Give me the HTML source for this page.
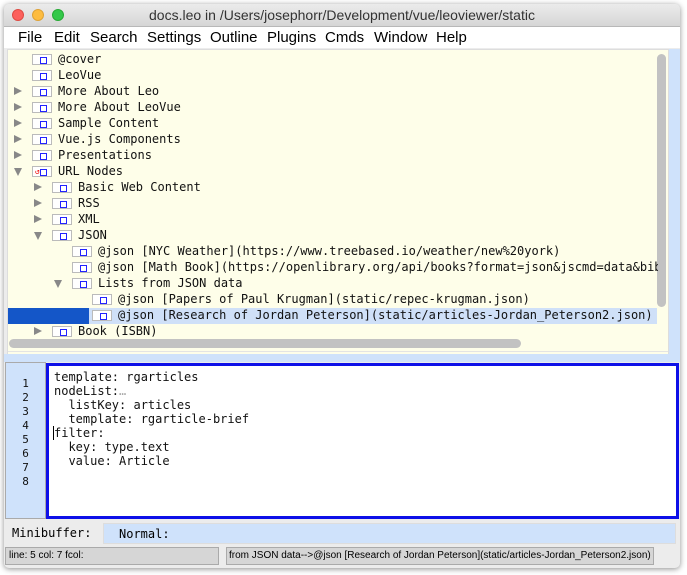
<!DOCTYPE html>
<html><head><style>
*{margin:0;padding:0;box-sizing:border-box}
body{width:687px;height:575px;background:#fff;position:relative;overflow:hidden;font-family:"Liberation Sans",sans-serif}
.win{position:absolute;left:4px;top:4px;width:676px;height:564px;background:#ececec;border-radius:5px;box-shadow:0 1px 6px rgba(0,0,0,.45);overflow:hidden}
.title{position:absolute;left:0;top:0;width:676px;height:23px;background:linear-gradient(#ebebeb,#d6d6d6);border-bottom:1px solid #b8b8b8;text-align:center;font-size:14px;line-height:23px;color:#333}
.dot{position:absolute;top:5px;width:12px;height:12px;border-radius:50%}
.menu{position:absolute;left:0;top:23px;width:676px;height:21px;background:#fff;font-size:15px;line-height:21px;color:#000}
.menu span{position:absolute;top:0}
.tree{position:absolute;left:3px;top:45px;width:662px;height:306px;background:#fefee9;border:1px solid #ddd}
.side{position:absolute;left:665px;top:45px;width:11px;height:306px;background:#cfe2fb}
.row{position:absolute;left:0;height:16px;width:650px;font-family:"DejaVu Sans Mono","Liberation Mono",monospace;font-size:12px;line-height:16px;white-space:nowrap;color:#111}
.ar{position:absolute;top:4px;width:0;height:0}
.ar.r{border-left:8px solid #888;border-top:4.5px solid transparent;border-bottom:4.5px solid transparent}
.ar.d{top:5px;border-top:8px solid #888;border-left:4.5px solid transparent;border-right:4.5px solid transparent}
.ic{position:absolute;top:3px;width:20px;height:11px;background:#fff;border:1px solid #bbb}
.ic:after{content:"";position:absolute;right:4px;top:2px;width:5px;height:5px;border:1px solid #22f}
.tx{position:absolute;top:0}
.mono{font-family:"DejaVu Sans Mono","Liberation Mono",monospace}
</style></head><body>
<div class="win">
 <div class="title">docs.leo in /Users/josephorr/Development/vue/leoviewer/static
  <div class="dot" style="left:8px;background:#fc605c;border:1px solid #de4a43"></div>
  <div class="dot" style="left:28px;background:#fdbc40;border:1px solid #dea236"></div>
  <div class="dot" style="left:48px;background:#34c84a;border:1px solid #27aa35"></div>
 </div>
 <div class="menu">
  <span style="left:14px">File</span><span style="left:50px">Edit</span><span style="left:86px">Search</span><span style="left:143px">Settings</span><span style="left:206px">Outline</span><span style="left:263px">Plugins</span><span style="left:321px">Cmds</span><span style="left:370px">Window</span><span style="left:432px">Help</span>
 </div>
 <div class="tree">
  <div style="position:absolute;left:0;top:258px;width:81px;height:16px;background:#1456c8"></div>
  <div style="position:absolute;left:81px;top:258px;width:568px;height:16px;background:#cfe0f8"></div>
  <div style="position:absolute;left:649px;top:4px;width:9px;height:253px;background:#c2c2c2;border-radius:5px"></div>
  <div style="position:absolute;left:1px;top:289px;width:512px;height:9px;background:#c2c2c2;border-radius:5px"></div>
  <div style="position:absolute;left:0;top:301px;width:660px;height:1px;background:#e4e4e4"></div>
 </div>
 <div class="side"></div>
 <div id="rows" style="position:absolute;left:0;top:47px"></div>
 <div style="position:absolute;left:0;top:350px;width:676px;height:8px;background:#cfe2fb"></div>
 <div style="position:absolute;left:1px;top:358px;width:41px;height:157px;background:#cfe2fb;border:1px solid #aaa"></div>
 <div class="mono" style="position:absolute;left:1px;top:373px;width:41px;font-size:11px;line-height:14px;text-align:center;color:#111">1<br>2<br>3<br>4<br>5<br>6<br>7<br>8</div>
 <div style="position:absolute;left:42px;top:359px;width:633px;height:156px;background:#fff;border:3px solid #0d10e8"></div>
 <pre class="mono" style="position:absolute;left:50px;top:366px;font-size:12px;line-height:14px;color:#111">template: rgarticles
nodeList:<span style="color:#aaa">…</span>
  listKey: articles
  template: rgarticle-brief
<span style="border-left:1px solid #000;margin-left:-1px"></span>filter:
  key: type.text
  value: Article</pre>
 <div class="mono" style="position:absolute;left:8px;top:520px;font-size:12px;line-height:18px">Minibuffer:</div>
 <div style="position:absolute;left:99px;top:519px;width:573px;height:21px;background:#cfe2fb;border:1px solid #ddd"></div>
 <div class="mono" style="position:absolute;left:115px;top:521px;font-size:12px;line-height:18px">Normal:</div>
 <div style="position:absolute;left:1px;top:543px;width:214px;height:18px;background:#d6d6d6;border:1px solid #aaa;font-size:10px;line-height:16px;padding-left:3px">line: 5 col: 7 fcol:</div>
 <div style="position:absolute;left:222px;top:543px;width:428px;height:18px;background:#d6d6d6;border:1px solid #aaa;font-size:10px;line-height:16px;padding-left:2px;white-space:nowrap;overflow:hidden">from JSON data--&gt;@json [Research of Jordan Peterson](static/articles-Jordan_Peterson2.json)</div>
</div>
<script>
var d=[[0,'','@cover'],[0,'','LeoVue'],[0,'r','More About Leo'],[0,'r','More About LeoVue'],[0,'r','Sample Content'],[0,'r','Vue.js Components'],[0,'r','Presentations'],[0,'d','URL Nodes',1],[1,'r','Basic Web Content'],[1,'r','RSS'],[1,'r','XML'],[1,'d','JSON'],[2,'','@json [NYC Weather](https://www.treebased.io/weather/new%20york)'],[2,'','@json [Math Book](https://openlibrary.org/api/books?format=json&jscmd=data&bib'],[2,'d','Lists from JSON data'],[3,'','@json [Papers of Paul Krugman](static/repec-krugman.json)'],[3,'','@json [Research of Jordan Peterson](static/articles-Jordan_Peterson2.json)'],[1,'r','Book (ISBN)']];
var h='';d.forEach(function(r,i){var x=20*r[0];var y=16*i;
h+='<div class="row" style="top:'+y+'px">';
if(r[1])h+='<span class="ar '+r[1]+'" style="left:'+(x+10)+'px"></span>';
h+='<span class="ic" style="left:'+(x+28)+'px">'+(r[3]?'<span style="position:absolute;left:2px;top:-3px;color:#e00;font-size:8px">&#8634;</span>':'')+'</span>';
h+='<span class="tx" style="left:'+(x+54)+'px;width:'+(600-x)+'px;overflow:hidden">'+r[2].replace(/&/g,'&amp;')+'</span></div>';});
document.getElementById('rows').innerHTML=h;
</script>
</body></html>
